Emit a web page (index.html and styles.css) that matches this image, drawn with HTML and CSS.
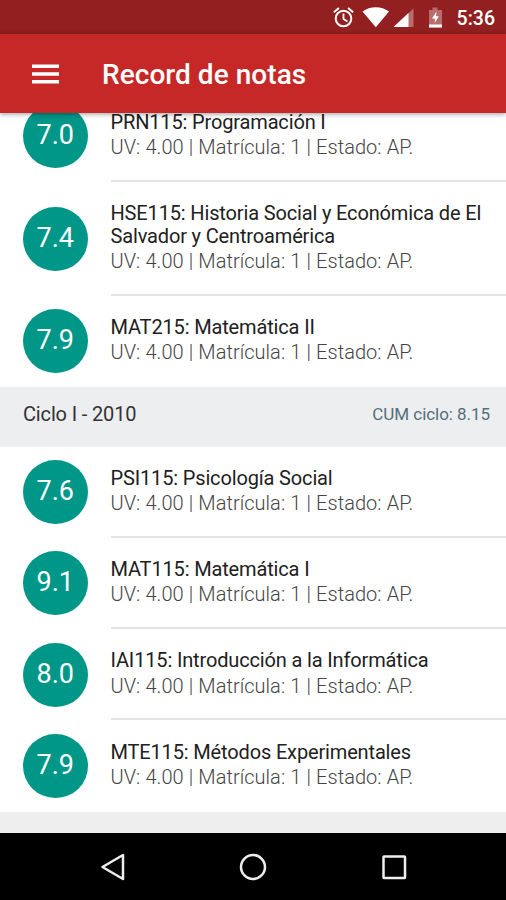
FILE: index.html
```html
<!DOCTYPE html>
<html lang="es">
<head>
<meta charset="utf-8">
<title>Record de notas</title>
<link rel="stylesheet" href="styles.css">
</head>
<body>
<div class="status">
  <svg class="status-icons" width="126" height="34" viewBox="0 0 126 34">
    <g fill="none" stroke="#fff" stroke-width="2">
      <circle cx="22.500" cy="18.500" r="7.800"/>
      <path d="M22.500 13.500v5.500l4 2.400" stroke-width="1.800"/>
      <path d="M12.900 12.200l5-4.200M32.100 12.200l-5-4.200"/>
    </g>
    <path d="M41.500 11.500C49 5.800 60.500 5.800 68 11.500L54.800 27.200z" fill="#fff"/>
    <path d="M92.500 8.500V27H72.500z" fill="#fff" opacity=".35"/>
    <path d="M87.500 13V27H72.500z" fill="#fff"/>
    <path d="M108 10h3.500V7.500h5V10h4.500v17.500H108z" fill="#fff" opacity=".35"/>
    <path d="M108 24.500h13v3h-13z" fill="#fff"/>
    <path d="M115.500 11.500l-4.500 7h2.800v4.500l4-6.700h-2.800z" fill="#fff"/>
  </svg>
  <span class="time">5:36</span>
</div>
<header class="bar">
  <svg width="27" height="20" viewBox="0 0 27 20"><path d="M0 2.200h27M0 10h27M0 17.800h27" stroke="#fff" stroke-width="3.400"/></svg>
  <h1>Record de notas</h1>
</header>
<main class="list">
  <article class="row clipped"><div class="grade">7.0</div><div class="info"><h2>PRN115: Programación I</h2><p>UV: 4.00 | Matrícula: 1 | Estado: AP.</p></div></article>
  <article class="row tall"><div class="grade">7.4</div><div class="info"><h2>HSE115: Historia Social y Económica de El<br>Salvador y Centroamérica</h2><p>UV: 4.00 | Matrícula: 1 | Estado: AP.</p></div></article>
  <article class="row last"><div class="grade">7.9</div><div class="info"><h2>MAT215: Matemática II</h2><p>UV: 4.00 | Matrícula: 1 | Estado: AP.</p></div></article>
  <div class="section"><span>Ciclo I - 2010</span><span class="cum">CUM ciclo: 8.15</span></div>
  <article class="row"><div class="grade">7.6</div><div class="info"><h2>PSI115: Psicología Social</h2><p>UV: 4.00 | Matrícula: 1 | Estado: AP.</p></div></article>
  <article class="row"><div class="grade">9.1</div><div class="info"><h2>MAT115: Matemática I</h2><p>UV: 4.00 | Matrícula: 1 | Estado: AP.</p></div></article>
  <article class="row"><div class="grade">8.0</div><div class="info"><h2>IAI115: Introducción a la Informática</h2><p>UV: 4.00 | Matrícula: 1 | Estado: AP.</p></div></article>
  <article class="row last"><div class="grade">7.9</div><div class="info"><h2>MTE115: Métodos Experimentales</h2><p>UV: 4.00 | Matrícula: 1 | Estado: AP.</p></div></article>
</main>
<nav class="nav">
  <svg width="28" height="28" viewBox="0 0 28 28"><path d="M24 2v24L3.500 14z"/></svg>
  <svg width="28" height="28" viewBox="0 0 28 28"><circle cx="14" cy="14" r="12"/></svg>
  <svg width="28" height="28" viewBox="0 0 28 28"><rect x="3.500" y="3.500" width="21.500" height="21.500" rx=".5"/></svg>
</nav>
</body>
</html>
```
FILE: styles.css
```css
* { box-sizing: border-box; }
body {
  margin: 0;
  width: 506px;
  height: 900px;
  overflow: hidden;
  display: flex;
  flex-direction: column;
  background: #eee;
  font-family: Roboto, "Noto Sans", sans-serif;
}
h1, h2, p { margin: 0; }
.status {
  flex: none;
  height: 34px;
  background: #922020;
  display: flex;
  justify-content: flex-end;
  align-items: center;
  padding-right: 11px;
  color: #fff;
}
.status-icons { margin-right: 10px; }
.time { font-size: 19.500px; font-weight: 500; line-height: 34px; padding-top: 3px; }
.bar {
  flex: none;
  height: 79px;
  background: #c62828;
  display: flex;
  align-items: center;
  gap: 43px;
  padding-left: 32px;
  box-shadow: 0 1px 5px rgba(0, 0, 0, .4);
  z-index: 1;
}
.bar h1 { color: #fff; font-size: 28px; font-weight: 500; line-height: 34px; padding-top: 2px; letter-spacing: .05px; }
.list {
  height: 720px;
  flex: none;
  display: flex;
  flex-direction: column;
  overflow: hidden;
}
.row {
  flex: none;
  height: 91.3px;
  background: #fff;
  display: flex;
  align-items: center;
  padding-left: 23px;
  gap: 23px;
}
.clipped { margin-top: -22.300px; }
.tall { height: 114px; }
.tall + .last { height: 90.500px; }
.grade {
  flex: none;
  width: 64.500px;
  height: 64px;
  border-radius: 50%;
  background: #009688;
  color: #fff;
  font-size: 27px;
  line-height: 63px;
  text-align: center;
}
.info {
  flex: 1;
  align-self: stretch;
  border-bottom: 2px solid #e4e4e4;
  display: flex;
  flex-direction: column;
  justify-content: center;
  padding-top: 1.500px;
}
.last .info { border-bottom-color: transparent; }
.info h2 { color: #212121; font-size: 20px; font-weight: 400; line-height: 22.500px; letter-spacing: -.15px; white-space: nowrap; }
.info p { color: #444; font-size: 20px; font-weight: 300; line-height: 28px; letter-spacing: .04px; word-spacing: .2px; white-space: nowrap; }
.section {
  flex: none;
  height: 60px;
  background: #eceef0;
  display: flex;
  justify-content: space-between;
  align-items: center;
  padding: 0 16px 5px 23px;
  color: #333;
  font-size: 20px;
  letter-spacing: -.15px;
}
.cum { color: #546e7a; font-size: 17px; letter-spacing: -.05px; }
.nav {
  flex: none;
  height: 67px;
  background: #000;
  display: flex;
  justify-content: center;
  align-items: center;
  gap: 112.500px;
}
.nav svg { fill: none; stroke: #eee; stroke-width: 2.500; stroke-linejoin: round; }
```
